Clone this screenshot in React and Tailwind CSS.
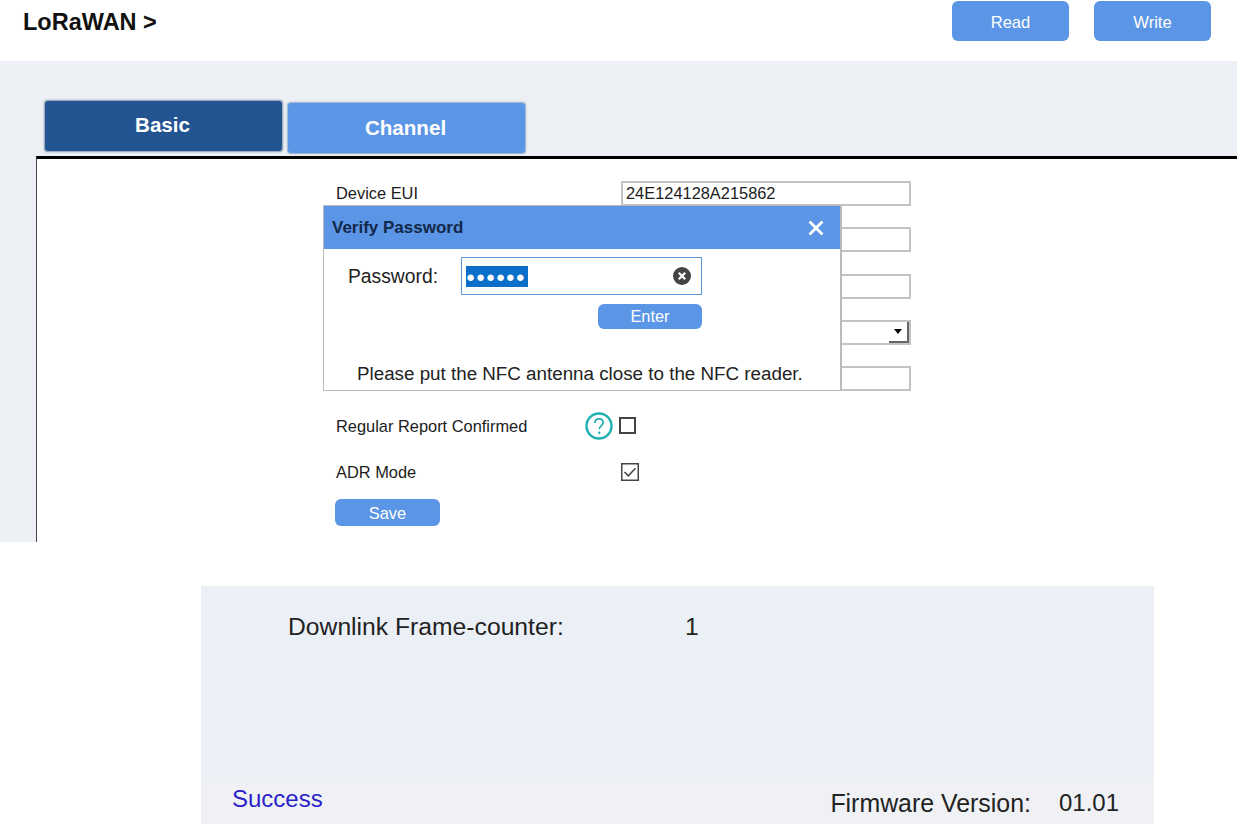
import React from "react";

const font = { fontFamily: '"Liberation Sans", Arial, sans-serif' };

function Row({ label, value, select, h = "h-[46px]" }) {
  return (
    <div className={`flex items-start ${h}`}>
      <span className="w-[285px] text-[16.4px] leading-[25px] text-[#1c1c1c]">{label}</span>
      <div className="relative w-[290px] h-[25px] border-2 border-[#c4c4c4] bg-white pl-[3px] text-[16.4px] leading-[21px] text-[#1c1c1c]">
        {value}
        {select && (
          <div className="absolute right-0 top-0 w-[20px] h-[21px] border-r-2 border-b-2 border-[#666] flex items-center justify-center">
            <div className="w-0 h-0 border-l-[4px] border-r-[4px] border-t-[5px] border-l-transparent border-r-transparent border-t-black" />
          </div>
        )}
      </div>
    </div>
  );
}

export default function App() {
  return (
    <div className="w-[1237px] h-[824px] bg-white overflow-hidden flex flex-col" style={font}>
      <header className="h-[61px] flex justify-between pl-[23px] pr-[26px] shrink-0">
        <h1 className="text-[23.5px] font-bold leading-[27px] mt-[9px] text-[#111]">LoRaWAN &gt;</h1>
        <div className="flex gap-[25px] pt-[1px]">
          <button className="w-[117px] h-[40px] rounded-[6px] bg-[#5b95e5] text-white text-[16.6px] pt-[5px]">Read</button>
          <button className="w-[117px] h-[40px] rounded-[6px] bg-[#5b95e5] text-white text-[16.6px] pt-[5px]">Write</button>
        </div>
      </header>

      <section className="h-[481px] shrink-0 bg-[#ecf0f4] pl-[36px] flex flex-col">
        <div className="h-[95px] shrink-0 flex items-start gap-[4px] pl-[8px] pt-[39px]">
          <div className="w-[239px] h-[52px] rounded-[4px] bg-[#225492] border border-[#9aa9bd] shadow-[0_0_2px_#8a9ab0] text-white font-bold text-[20.6px] flex items-center justify-center pb-[1px] pr-[2px]">Basic</div>
          <div className="w-[239px] h-[52px] mt-[2px] rounded-[4px] bg-[#5b95e5] border border-[#a9bcd6] shadow-[0_0_2px_#a9bcd6] text-white font-bold text-[20.6px] flex items-center justify-center pr-[2px]">Channel</div>
        </div>
        <main className="relative flex-1 bg-white border-t-[3px] border-t-black border-l border-l-[#444] pl-[299px] pt-[22px]">
          <Row label="Device EUI" value="24E124128A215862" />
          <Row h="h-[47px]" />
          <Row />
          <Row select />
          <Row h="h-[37px]" />

          <div className="flex items-center h-[46px] text-[16.4px] text-[#1c1c1c]">
            <span className="w-[249px]">Regular Report Confirmed</span>
            <svg width="28" height="28" viewBox="0 0 28 28" className="shrink-0">
              <circle cx="14" cy="14" r="12.5" fill="none" stroke="#1fb0b0" strokeWidth="2.4" />
              <path d="M9.8 11c0-2.5 1.9-4.2 4.3-4.2s4.1 1.6 4.1 3.7c0 3-3.9 3.2-3.9 6.8" fill="none" stroke="#1fb0b0" strokeWidth="1.7" />
              <circle cx="14.3" cy="20.8" r="1.2" fill="#1fb0b0" />
            </svg>
            <span className="ml-[6px] mt-[-1px] w-[17px] h-[17px] border-2 border-[#444] bg-white" />
          </div>
          <div className="flex items-center h-[46px] text-[16.4px] text-[#1c1c1c]">
            <span className="w-[285px]">ADR Mode</span>
            <svg width="18" height="18" viewBox="0 0 18 18" className="shrink-0">
              <rect x="0.75" y="0.75" width="16.5" height="16.5" fill="white" stroke="#444" strokeWidth="1.5" />
              <path d="M3.5 9l3.8 3.8 7.2-7.6" fill="none" stroke="#444" strokeWidth="1.5" />
            </svg>
          </div>
          <button className="block w-[105px] h-[27px] ml-[-1px] mt-[4px] rounded-[6px] bg-[#5b95e5] text-white text-[16.4px] pt-[1px]">Save</button>

          <div className="absolute left-[286px] top-[46px] w-[519px] h-[186px] bg-white border border-[#bbb] border-r-2">
            <div className="h-[43px] bg-[#5b95e5] flex items-center justify-between pl-[8px] pr-[16px]">
              <span className="font-bold text-[17px] text-[#12284a]">Verify Password</span>
              <svg width="16" height="16" viewBox="0 0 16 16">
                <path d="M1.5 1.5l13 13M14.5 1.5l-13 13" stroke="white" strokeWidth="2.8" />
              </svg>
            </div>
            <div className="flex items-center pl-[24px] mt-[8px]">
              <span className="w-[113px] text-[19.3px] text-[#222] pt-[3px]">Password:</span>
              <div className="relative w-[241px] h-[38px] border border-[#5b9bd5] flex items-center pl-[4px] pr-[9px] justify-between">
                <span className="bg-[#0a6fc9] text-white h-[21px] w-[62px] text-[15px] leading-[21px] tracking-[0.9px] overflow-hidden">●●●●●●</span>
                <svg width="18" height="18" viewBox="0 0 18 18" className="mr-[1px]">
                  <circle cx="9" cy="9" r="9" fill="#444" />
                  <path d="M5.8 5.8l6.4 6.4M12.2 5.8l-6.4 6.4" stroke="white" strokeWidth="2.2" />
                </svg>
              </div>
            </div>
            <div className="flex justify-end pr-[138px] mt-[9px]">
              <button className="w-[104px] h-[25px] rounded-[6px] bg-[#5b95e5] text-white text-[16.4px]">Enter</button>
            </div>
            <p className="mt-[33px] pl-[33px] text-[18.8px] leading-[24px] text-[#222]">Please put the NFC antenna close to the NFC reader.</p>
          </div>
        </main>
      </section>

      <section className="ml-[201px] mt-[44px] w-[953px] h-[238px] bg-[#ebf0f6] flex flex-col">
        <div className="h-[191px] shrink-0 flex pl-[87px] pt-[26px] text-[24.7px] leading-[30px] text-[#222]">
          <span className="w-[397px]">Downlink Frame-counter:</span>
          <span>1</span>
        </div>
        <div className="flex-1 bg-[#eff1f4] flex justify-between pl-[31px] pr-[35px] text-[24px] leading-[30px]">
          <span className="text-[#2a1fc8] mt-[7px]">Success</span>
          <div className="flex gap-[28px] text-[#222] mt-[11px]">
            <span className="text-[24.9px]">Firmware Version:</span>
            <span>01.01</span>
          </div>
        </div>
      </section>
    </div>
  );
}
